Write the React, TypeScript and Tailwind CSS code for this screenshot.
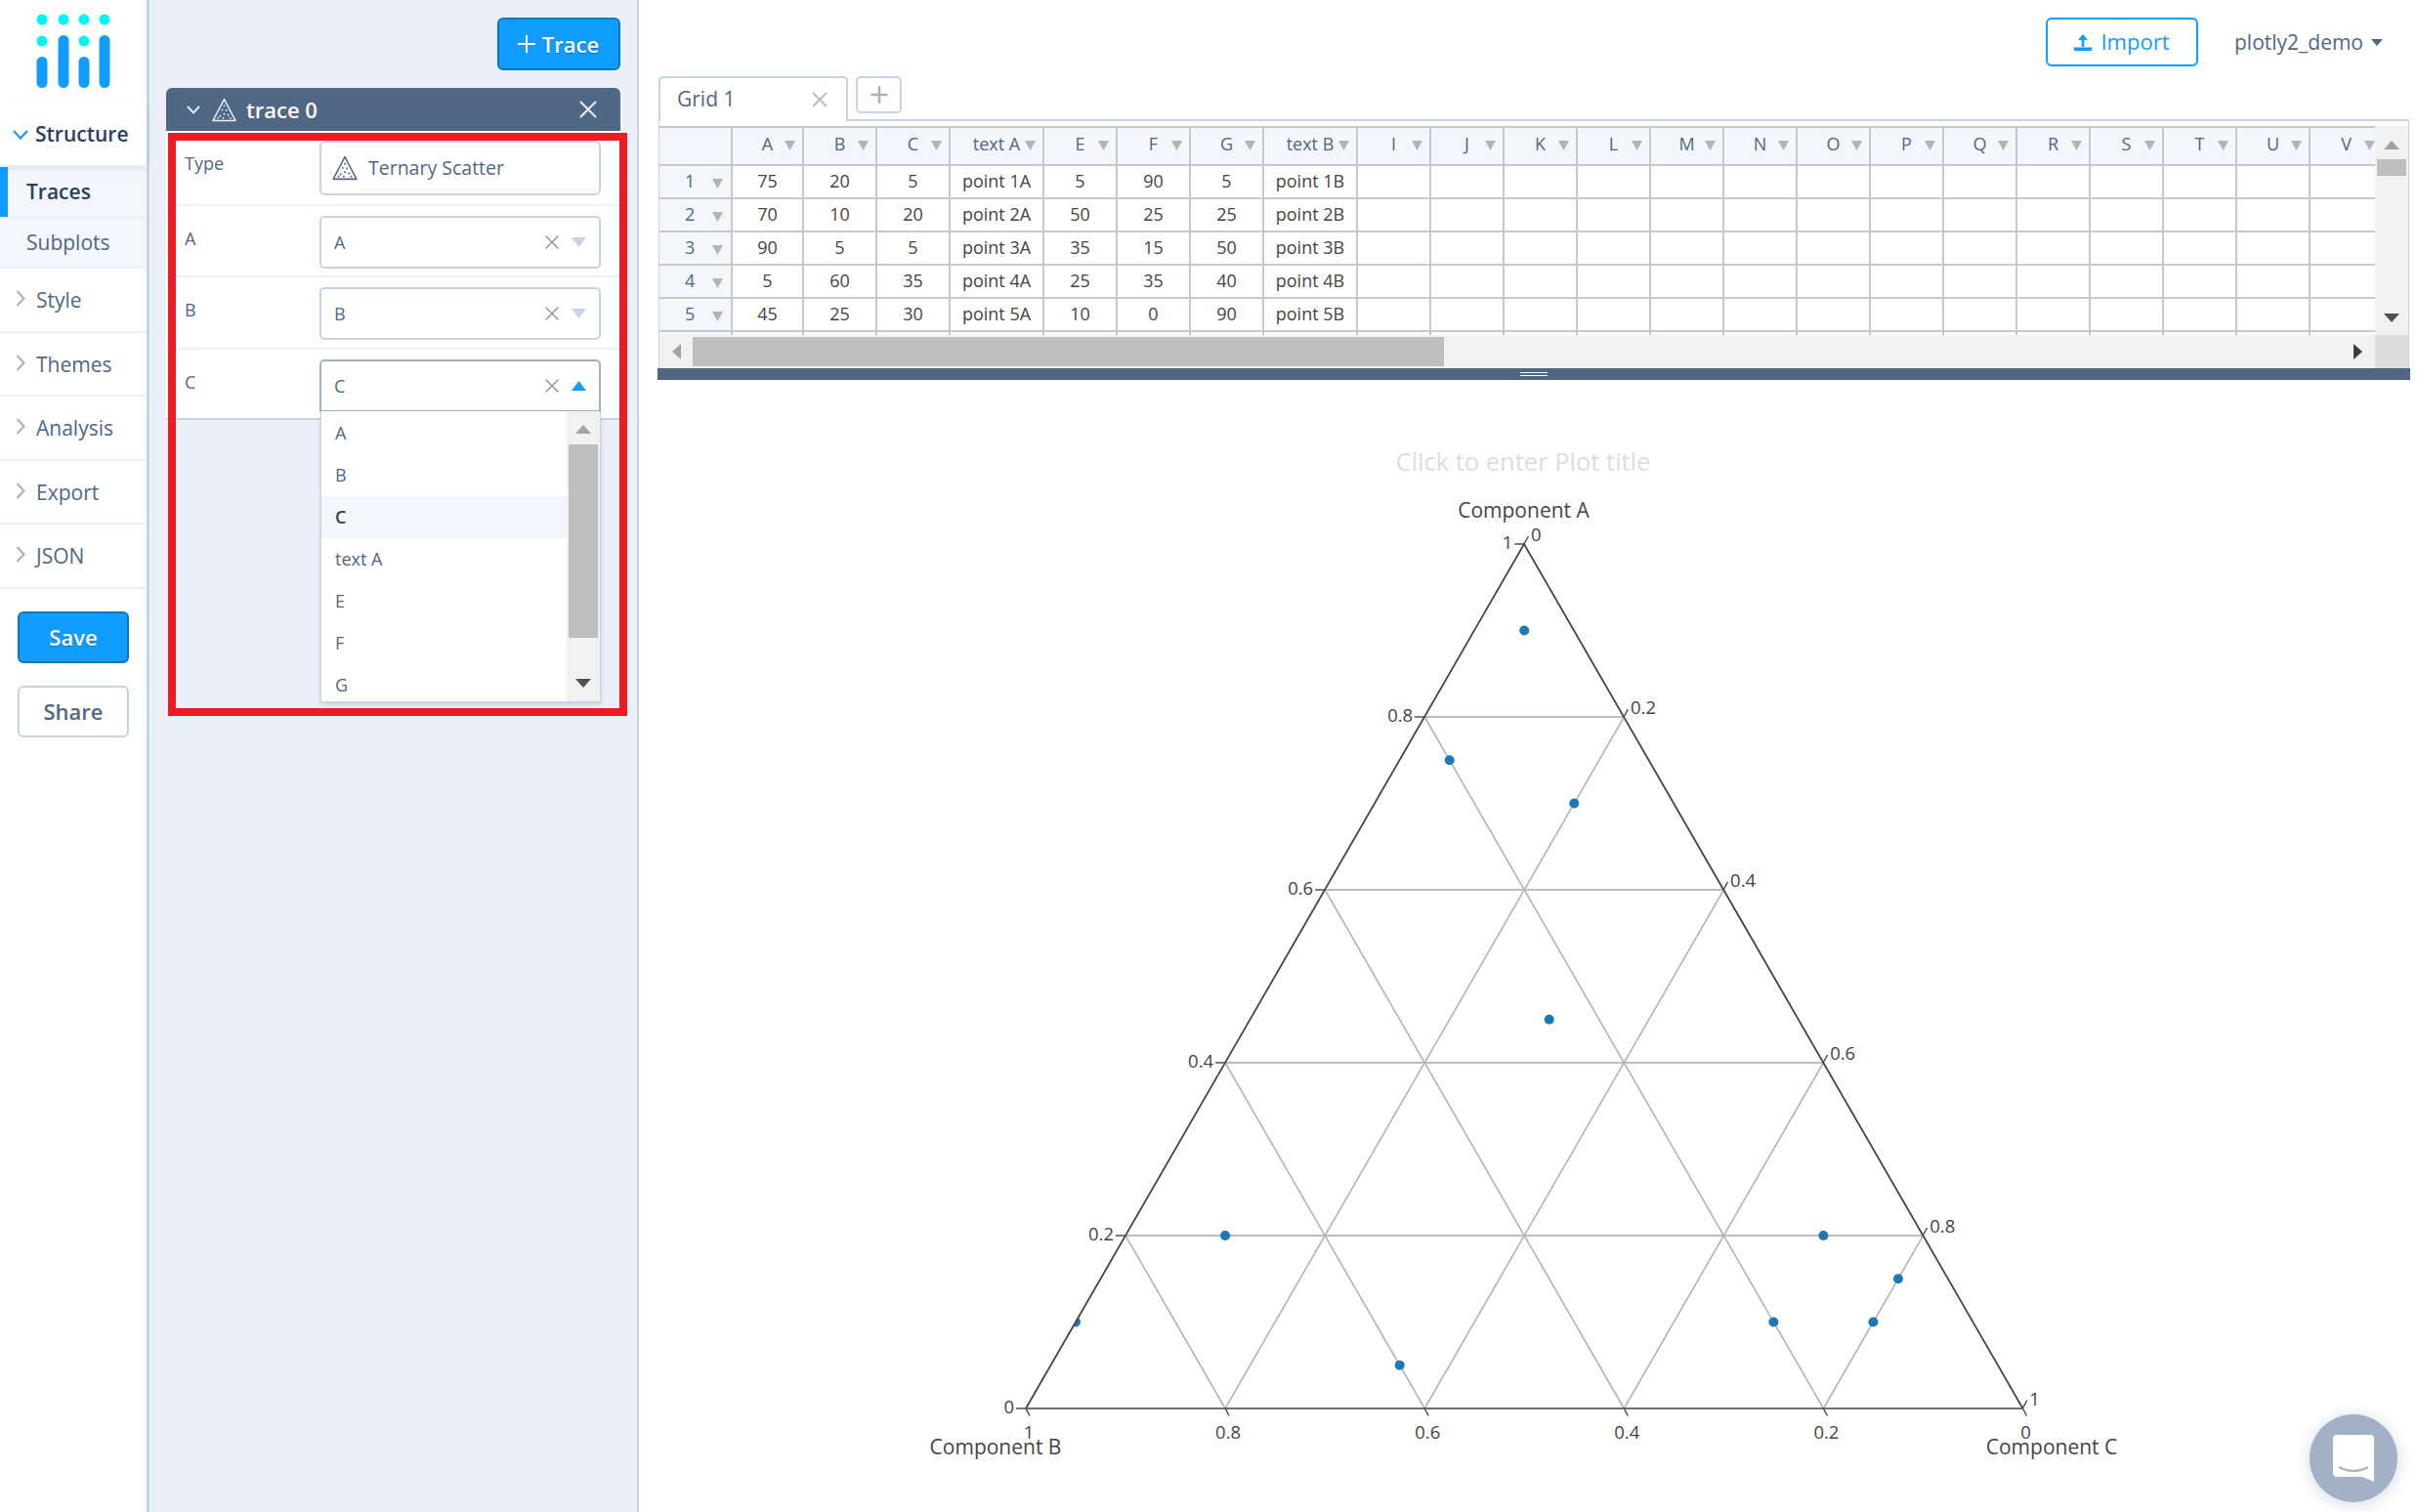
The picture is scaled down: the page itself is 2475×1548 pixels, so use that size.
import React from "react";
import { X, Plus } from "lucide-react";

const Tri = ({ c, s = 24 }: { c: string; s?: number }) => (
  <svg width={s} height={s} viewBox="0 0 24 24" fill="none">
    <path d="M12 1.5 L23 22.5 H1 Z" stroke={c} strokeWidth="1.4" strokeLinejoin="round" />
    {[[12, 8], [10, 12], [14, 12.5], [12, 16], [8, 18], [16, 17], [6, 20], [11, 20], [18, 20]].map(([x, y], i) => (
      <circle key={i} cx={x} cy={y} r="0.9" fill={c} />
    ))}
  </svg>
);

const Caret = ({ c = "#b4b4b4" }: { c?: string }) => (
  <svg width="11" height="10" viewBox="0 0 11 10"><path d="M0 0H11L5.5 10Z" fill={c} /></svg>
);

const Nav = ({ label }: { label: string }) => (
  <div className="h-[65.5px] flex items-center border-b-2 border-[#ebf0f8] pl-[16px] gap-[11px] pt-[2px] text-[21px] text-[#506784]">
    <svg width="10" height="17" viewBox="0 0 10 17" fill="none" className="-translate-y-[2px]">
      <path d="M1.5 1L8.5 8.5L1.5 16" stroke="#a2b1c6" strokeWidth="2" />
    </svg>
    <span>{label}</span>
  </div>
);

const Select = ({ v, open }: { v: string; open?: boolean }) => (
  <div className={`h-[54px] w-[288px] rounded-[5px] bg-white border-2 flex items-center pl-[13px] pr-[13px] text-[18px] text-[#506784] ${open ? "border-[#a2b1c6] rounded-b-none" : "border-[#c8d4e3]"}`}>
    <span className="flex-1">{v}</span>
    <X size={24} color="#9a9a9a" strokeWidth={1.6} className="mr-[8px]" />
    <svg width="15" height="10" viewBox="0 0 15 10"><path d={open ? "M0 10H15L7.5 0Z" : "M0 0H15L7.5 10Z"} fill={open ? "#119dff" : "#c8d4e3"} /></svg>
  </div>
);

const Row = ({ label, children, h, last, pt = "pt-[20px]" }: { label: string; children: React.ReactNode; h: string; last?: boolean; pt?: string }) => (
  <div className={`flex ${h} ${last ? "border-b-2 border-[#c8d4e3]" : "border-b-2 border-[#ebf0f8]"}`}>
    <div className={`w-[157px] pl-[19px] text-[18px] text-[#506784] ${pt}`}>{label}</div>
    <div className="pt-[10px] relative">{children}</div>
  </div>
);

const columns: [string, number][] = [
  ["A", 73], ["B", 75], ["C", 75], ["text A", 96], ["E", 75], ["F", 75], ["G", 75], ["text B", 96],
  ...["I", "J", "K", "L", "M", "N", "O", "P", "Q", "R", "S", "T", "U", "V"].map((x) => [x, 75] as [string, number]),
];
const rows = [
  ["75", "20", "5", "point 1A", "5", "90", "5", "point 1B"],
  ["70", "10", "20", "point 2A", "50", "25", "25", "point 2B"],
  ["90", "5", "5", "point 3A", "35", "15", "50", "point 3B"],
  ["5", "60", "35", "point 4A", "25", "35", "40", "point 4B"],
  ["45", "25", "30", "point 5A", "10", "0", "90", "point 5B"],
  ["", "", "", "", "", "", "", ""],
];

const L = 1050, R = 2070.5, B = 1442, H = 885;
const pos = (a: number, c: number): [number, number] => [L + (R - L) * (c + a / 2), B - H * a];
const pts = [[.75, .05], [.7, .2], [.9, .05], [.05, .35], [.45, .3], [.2, .1], [.1, 0], [.2, .7], [.1, .7], [.1, .8], [.15, .8]];
const vs = [.2, .4, .6, .8];

const Plot = () => (
  <svg className="block shrink-0" width="1821" height="1159" viewBox="654 389 1821 1159">
    <text x="1559" y="472" textAnchor="middle" dominantBaseline="central" fontSize="25.5" fill="#dddddd">Click to enter Plot title</text>
    <defs>
      <clipPath id="tri"><path d={`M${L} ${B}L${R} ${B}L1560 ${B - H}Z`} /></clipPath>
    </defs>
    {vs.map((v) => {
      const a1 = pos(v, 0), a2 = pos(v, 1 - v), c1 = pos(0, v), c2 = pos(1 - v, v), b1 = pos(0, 1 - v), b2 = pos(1 - v, 0);
      return (
        <g key={v} stroke="#b4b4b4" strokeWidth="1.6">
          <line x1={a1[0]} y1={a1[1]} x2={a2[0]} y2={a2[1]} strokeWidth="2" stroke="#bdbdbd" />
          <line x1={c1[0]} y1={c1[1]} x2={c2[0]} y2={c2[1]} />
          <line x1={b1[0]} y1={b1[1]} x2={b2[0]} y2={b2[1]} />
        </g>
      );
    })}
    <g clipPath="url(#tri)">
      {pts.map(([a, c], i) => {
        const [x, y] = pos(a, c);
        return <circle key={i} cx={x} cy={y} r="5" fill="#1f77b4" />;
      })}
    </g>
    <path d={`M${L} ${B}L1560 ${B - H}L${R} ${B}`} fill="none" stroke="#444" strokeWidth="1.8" />
    <line x1={L} y1={B} x2={R} y2={B} stroke="#707070" strokeWidth="2" />
    {[0, .2, .4, .6, .8, 1].map((v) => {
      const lx = L + 510.25 * v, ly = B - H * v;
      const rx = 1560 + 510.25 * v, ry = B - H + H * v;
      const bx = R - (R - L) * v;
      const tl = v === 1 ? "1" : String(v);
      return (
        <g key={v} fontSize="18.5" fill="#444" dominantBaseline="central">
          <line x1={lx - 10} y1={ly} x2={lx} y2={ly} stroke="#444" strokeWidth="1.4" />
          <line x1={rx} y1={ry} x2={rx + 4.4} y2={ry - 8} stroke="#444" strokeWidth="1.4" />
          <line x1={bx} y1={B} x2={bx + 4} y2={B + 7.5} stroke="#444" strokeWidth="1.4" />
          <text x={lx - 12} y={ly - 3} textAnchor="end">{tl}</text>
          <text x={rx + 7} y={ry - 10.5} textAnchor="start">{tl}</text>
          <text x={bx + 3} y={1465} textAnchor="middle">{tl}</text>
        </g>
      );
    })}
    <g fontSize="21" fill="#444" dominantBaseline="central" textAnchor="middle">
      <text x="1559.5" y="522">Component A</text>
      <text x="1019" y="1481">Component B</text>
      <text x="2100" y="1481">Component C</text>
    </g>
  </svg>
);

export default function App() {
  return (
    <div className="relative flex w-[2475px] h-[1548px] overflow-hidden bg-white font-['Open_Sans',sans-serif] text-[#506784]">
      {/* Sidebar */}
      <aside className="w-[153px] shrink-0 border-r-[3px] border-[#c8d4e3] bg-white">
        <div className="h-[105px] flex justify-center">
          <svg width="78" height="95" viewBox="36 0 78 95">
            {[43, 65, 86, 107].map((x) => <circle key={x} cx={x} cy={20} r="5.5" fill="#00f6ff" />)}
            {[43, 86].map((x) => <circle key={x} cx={x} cy={42} r="5.5" fill="#00f6ff" />)}
            {[43, 86].map((x) => <rect key={x} x={x - 5.5} y="58" width="11" height="32" rx="5.5" fill="#119dff" />)}
            {[65, 107].map((x) => <rect key={x} x={x - 5.5} y="36" width="11" height="54" rx="5.5" fill="#119dff" />)}
          </svg>
        </div>
        <div className="relative z-10 h-[64px] flex items-center gap-[7px] pl-[13px] pt-[2px] text-[21px] font-semibold text-[#2a3f5f] shadow-[0_3px_6px_rgba(80,103,132,0.18)] bg-white">
          <svg width="16" height="10" viewBox="0 0 16 10" fill="none"><path d="M1 1L8 8.5L15 1" stroke="#119dff" strokeWidth="2.2" /></svg>
          <span>Structure</span>
        </div>
        <div className="bg-[#f3f6fa] mt-[2px]">
          <div className="h-[51px] flex items-center pl-[19px] border-l-[8px] border-[#119dff] text-[21px] font-semibold text-[#2a3f5f] bg-[#f3f6fa]">Traces</div>
          <div className="h-[53px] flex items-center pl-[27px] text-[21px] border-t-2 border-b-2 border-[#ebf0f8]">Subplots</div>
        </div>
        <Nav label="Style" />
        <Nav label="Themes" />
        <Nav label="Analysis" />
        <Nav label="Export" />
        <Nav label="JSON" />
        <div className="pl-[18px] pt-[23px] flex flex-col gap-[23px]">
          <button className="w-[114px] h-[53px] rounded-[6px] bg-[#119dff] border-2 border-[#0d76bf] text-white font-semibold text-[22px] [text-shadow:0_1px_1px_rgba(0,0,0,0.3)]">Save</button>
          <button className="w-[114px] h-[53px] rounded-[6px] bg-white border-2 border-[#c8d4e3] text-[#506784] font-semibold text-[22px]">Share</button>
        </div>
      </aside>

      {/* Panel */}
      <section className="relative w-[501px] shrink-0 bg-[#ebf0f8] border-r-2 border-[#c8d4e3] pl-[17px] pt-[18px]">
        <div className="flex w-[465px] justify-end">
          <button className="w-[126px] h-[54px] rounded-[6px] bg-[#119dff] border-2 border-[#0d76bf] text-white font-semibold text-[22px] flex items-center justify-center gap-[2px] [text-shadow:0_1px_1px_rgba(0,0,0,0.3)]">
            <Plus size={28} strokeWidth={1.7} className="-ml-[6px]" />Trace
          </button>
        </div>
        <div className="mt-[18px] w-[465px] h-[44px] rounded-t-[6px] bg-[#506784] flex items-center pl-[21px] pr-[18px] text-white font-semibold text-[22px]">
          <svg width="14" height="9" viewBox="0 0 14 9" fill="none"><path d="M1 1L7 7.5L13 1" stroke="#dfe8f3" strokeWidth="2" /></svg>
          <span className="ml-[12px] mr-[10px]"><Tri c="#ebf0f8" s={25} /></span>
          <span className="flex-1">trace 0</span>
          <X size={30} color="#ebf0f8" strokeWidth={1.5} />
        </div>
        <div className="w-[465px] bg-white rounded-b-[6px]">
          <Row label="Type" h="h-[77px]" pt="pt-[20px]">
            <div className="h-[56px] w-[288px] rounded-[6px] border-2 border-[#c8d4e3] bg-white flex items-center pl-[11px] gap-[11px] text-[19.5px]">
              <Tri c="#506784" s={26} />
              <span>Ternary Scatter</span>
            </div>
          </Row>
          <Row label="A" h="h-[73px]"><Select v="A" /></Row>
          <Row label="B" h="h-[74px]"><Select v="B" /></Row>
          <Row label="C" h="h-[72px]" last>
            <Select v="C" open />
            <div className="absolute z-20 left-[1px] top-[63px] w-[287px] h-[298px] bg-white border-x border-b border-[#c8d4e3] shadow-[0_2px_4px_rgba(80,103,132,0.25)] flex text-[18px]">
              <div className="flex-1 overflow-hidden pt-[1px]">
                {["A", "B", "C", "text A", "E", "F", "G"].map((o) => (
                  <div key={o} className={`h-[43px] pl-[14px] flex items-center ${o === "C" ? "bg-[#f3f6fa] text-[#2a3f5f] font-semibold" : ""}`}>{o}</div>
                ))}
              </div>
              <div className="w-[34px] bg-[#f1f1f1] flex flex-col items-center">
                <svg className="mt-[14px]" width="16" height="9" viewBox="0 0 16 9"><path d="M0 9H16L8 0Z" fill="#a3a3a3" /></svg>
                <div className="w-[30px] h-[198px] mt-[11px] bg-[#bfbfbf]" />
                <svg className="mt-[42px]" width="16" height="9" viewBox="0 0 16 9"><path d="M0 0H16L8 9Z" fill="#505050" /></svg>
              </div>
            </div>
          </Row>
        </div>
        {/* annotation */}
        <div className="absolute left-[19px] top-[136px] w-[470px] h-[597px] border-[8px] border-[#ed1c24] pointer-events-none z-30" />
      </section>

      {/* Main */}
      <main className="flex-1 min-w-0 flex flex-col">
        <div className="pl-[20px] pr-[9px]">
          <div className="h-[78px] flex justify-end items-start pt-[18px] pr-[27px]">
            <button className="w-[156px] h-[50px] rounded-[6px] border-2 border-[#119dff] text-[#119dff] text-[22px] flex items-center justify-center gap-[9px]">
              <svg width="18" height="18" viewBox="0 0 18 18"><path d="M9 1L14 7H10.3V14H7.7V7H4Z M0 14.5H18V18H0Z" fill="#119dff" /></svg>
              <span className="-translate-y-px">Import</span>
            </button>
            <div className="ml-[37px] h-[50px] flex items-center gap-[8px] text-[21px]">
              <span className="translate-y-px">plotly2_demo</span>
              <svg width="12" height="7" viewBox="0 0 12 7"><path d="M0 0H12L6 7Z" fill="#506784" /></svg>
            </div>
          </div>
          <div className="h-[46px] flex items-start gap-[8px]">
            <div className="relative z-10 w-[194px] h-[46px] bg-white rounded-t-[5px] border-x-2 border-t-2 border-[#c8d4e3] flex items-center pl-[17px] pr-[14px] text-[21px]">
              <span className="flex-1">Grid 1</span>
              <X size={26} color="#a2b1c6" strokeWidth={1.6} />
            </div>
            <div className="w-[47px] h-[38px] rounded-[5px] border-2 border-[#c8d4e3] flex items-center justify-center">
              <Plus size={26} color="#a2b1c6" strokeWidth={2.4} />
            </div>
          </div>
          <div className="-mt-[2px] border-t-2 border-x border-[#c8d4e3] pt-[5px] bg-white">
            <div className="flex h-[214px]">
              <div className="flex-1 min-w-0 overflow-hidden text-[18px] text-[#444]">
                <div className="flex h-[37px] box-content border-t-2 border-b-2 border-[#c8c8c8] w-max text-[#506784] bg-[#f3f6fa]">
                  <div className="w-[75px] border-r-2 border-[#c8c8c8]" />
                  {columns.map(([n, w]) => (
                    <div key={n} style={{ width: w }} className="relative border-r-2 border-[#c8c8c8] flex items-center justify-center">
                      <span className="-translate-y-[2px]">{n}</span>
                      <span className="absolute right-[7px] top-[13px]"><Caret /></span>
                    </div>
                  ))}
                </div>
                {rows.map((r, i) => (
                  <div key={i} className="flex w-max h-[34px] border-b-2 border-[#c8c8c8]">
                    <div className="w-[75px] bg-[#f3f6fa] border-r-2 border-[#c8c8c8] flex items-center text-[#506784] pl-[26px]">
                      <span className="w-[28px] -translate-y-px">{i < 5 ? i + 1 : ""}</span>
                      {i < 5 && <span className="translate-y-[2px]"><Caret /></span>}
                    </div>
                    {columns.map(([n, w], j) => (
                      <div key={n} style={{ width: w }} className="border-r-2 border-[#c8c8c8] flex items-center justify-center"><span className="-translate-y-px">{r[j] ?? ""}</span></div>
                    ))}
                  </div>
                ))}
              </div>
              <div className="w-[34px] shrink-0 bg-[#f1f1f1] flex flex-col items-center">
                <svg className="mt-[15px]" width="16" height="9" viewBox="0 0 16 9"><path d="M0 9H16L8 0Z" fill="#a3a3a3" /></svg>
                <div className="w-[30px] h-[17px] mt-[10px] bg-[#bfbfbf]" />
                <svg className="mt-[141px]" width="16" height="9" viewBox="0 0 16 9"><path d="M0 0H16L8 9Z" fill="#505050" /></svg>
              </div>
            </div>
            <div className="flex h-[34px] bg-[#f1f1f1]">
              <div className="flex-1 flex items-center pl-[13px] pr-[13px]">
                <svg width="9" height="16" viewBox="0 0 9 16"><path d="M9 0V16L0 8Z" fill="#a3a3a3" /></svg>
                <div className="ml-[12px] w-[769px] h-[30px] bg-[#bfbfbf]" />
                <div className="flex-1" />
                <svg width="9" height="16" viewBox="0 0 9 16"><path d="M0 0V16L9 8Z" fill="#404040" /></svg>
              </div>
              <div className="w-[34px] bg-[#dcdcdc]" />
            </div>
          </div>
          <div className="h-[12px] bg-[#506784] flex flex-col items-center justify-center gap-[2px] -mx-px">
            <div className="w-[28px] h-px bg-white" />
            <div className="w-[28px] h-px bg-white" />
          </div>
        </div>
        <Plot />
      </main>

      {/* chat launcher */}
      <div className="absolute left-[2364px] top-[1448px] w-[90px] h-[90px] rounded-full bg-[#a2b1c6] shadow-[0_2px_16px_rgba(80,103,132,0.25)] flex items-center justify-center">
        <svg width="42" height="48" viewBox="0 0 42 48">
          <path d="M4 0H38A4 4 0 0 1 42 4V48L30 43H4A4 4 0 0 1 0 39V4A4 4 0 0 1 4 0Z" fill="#fff" />
          <path d="M6 33Q21 41 36 33" stroke="#a2b1c6" strokeWidth="2.2" fill="none" />
        </svg>
      </div>
    </div>
  );
}
